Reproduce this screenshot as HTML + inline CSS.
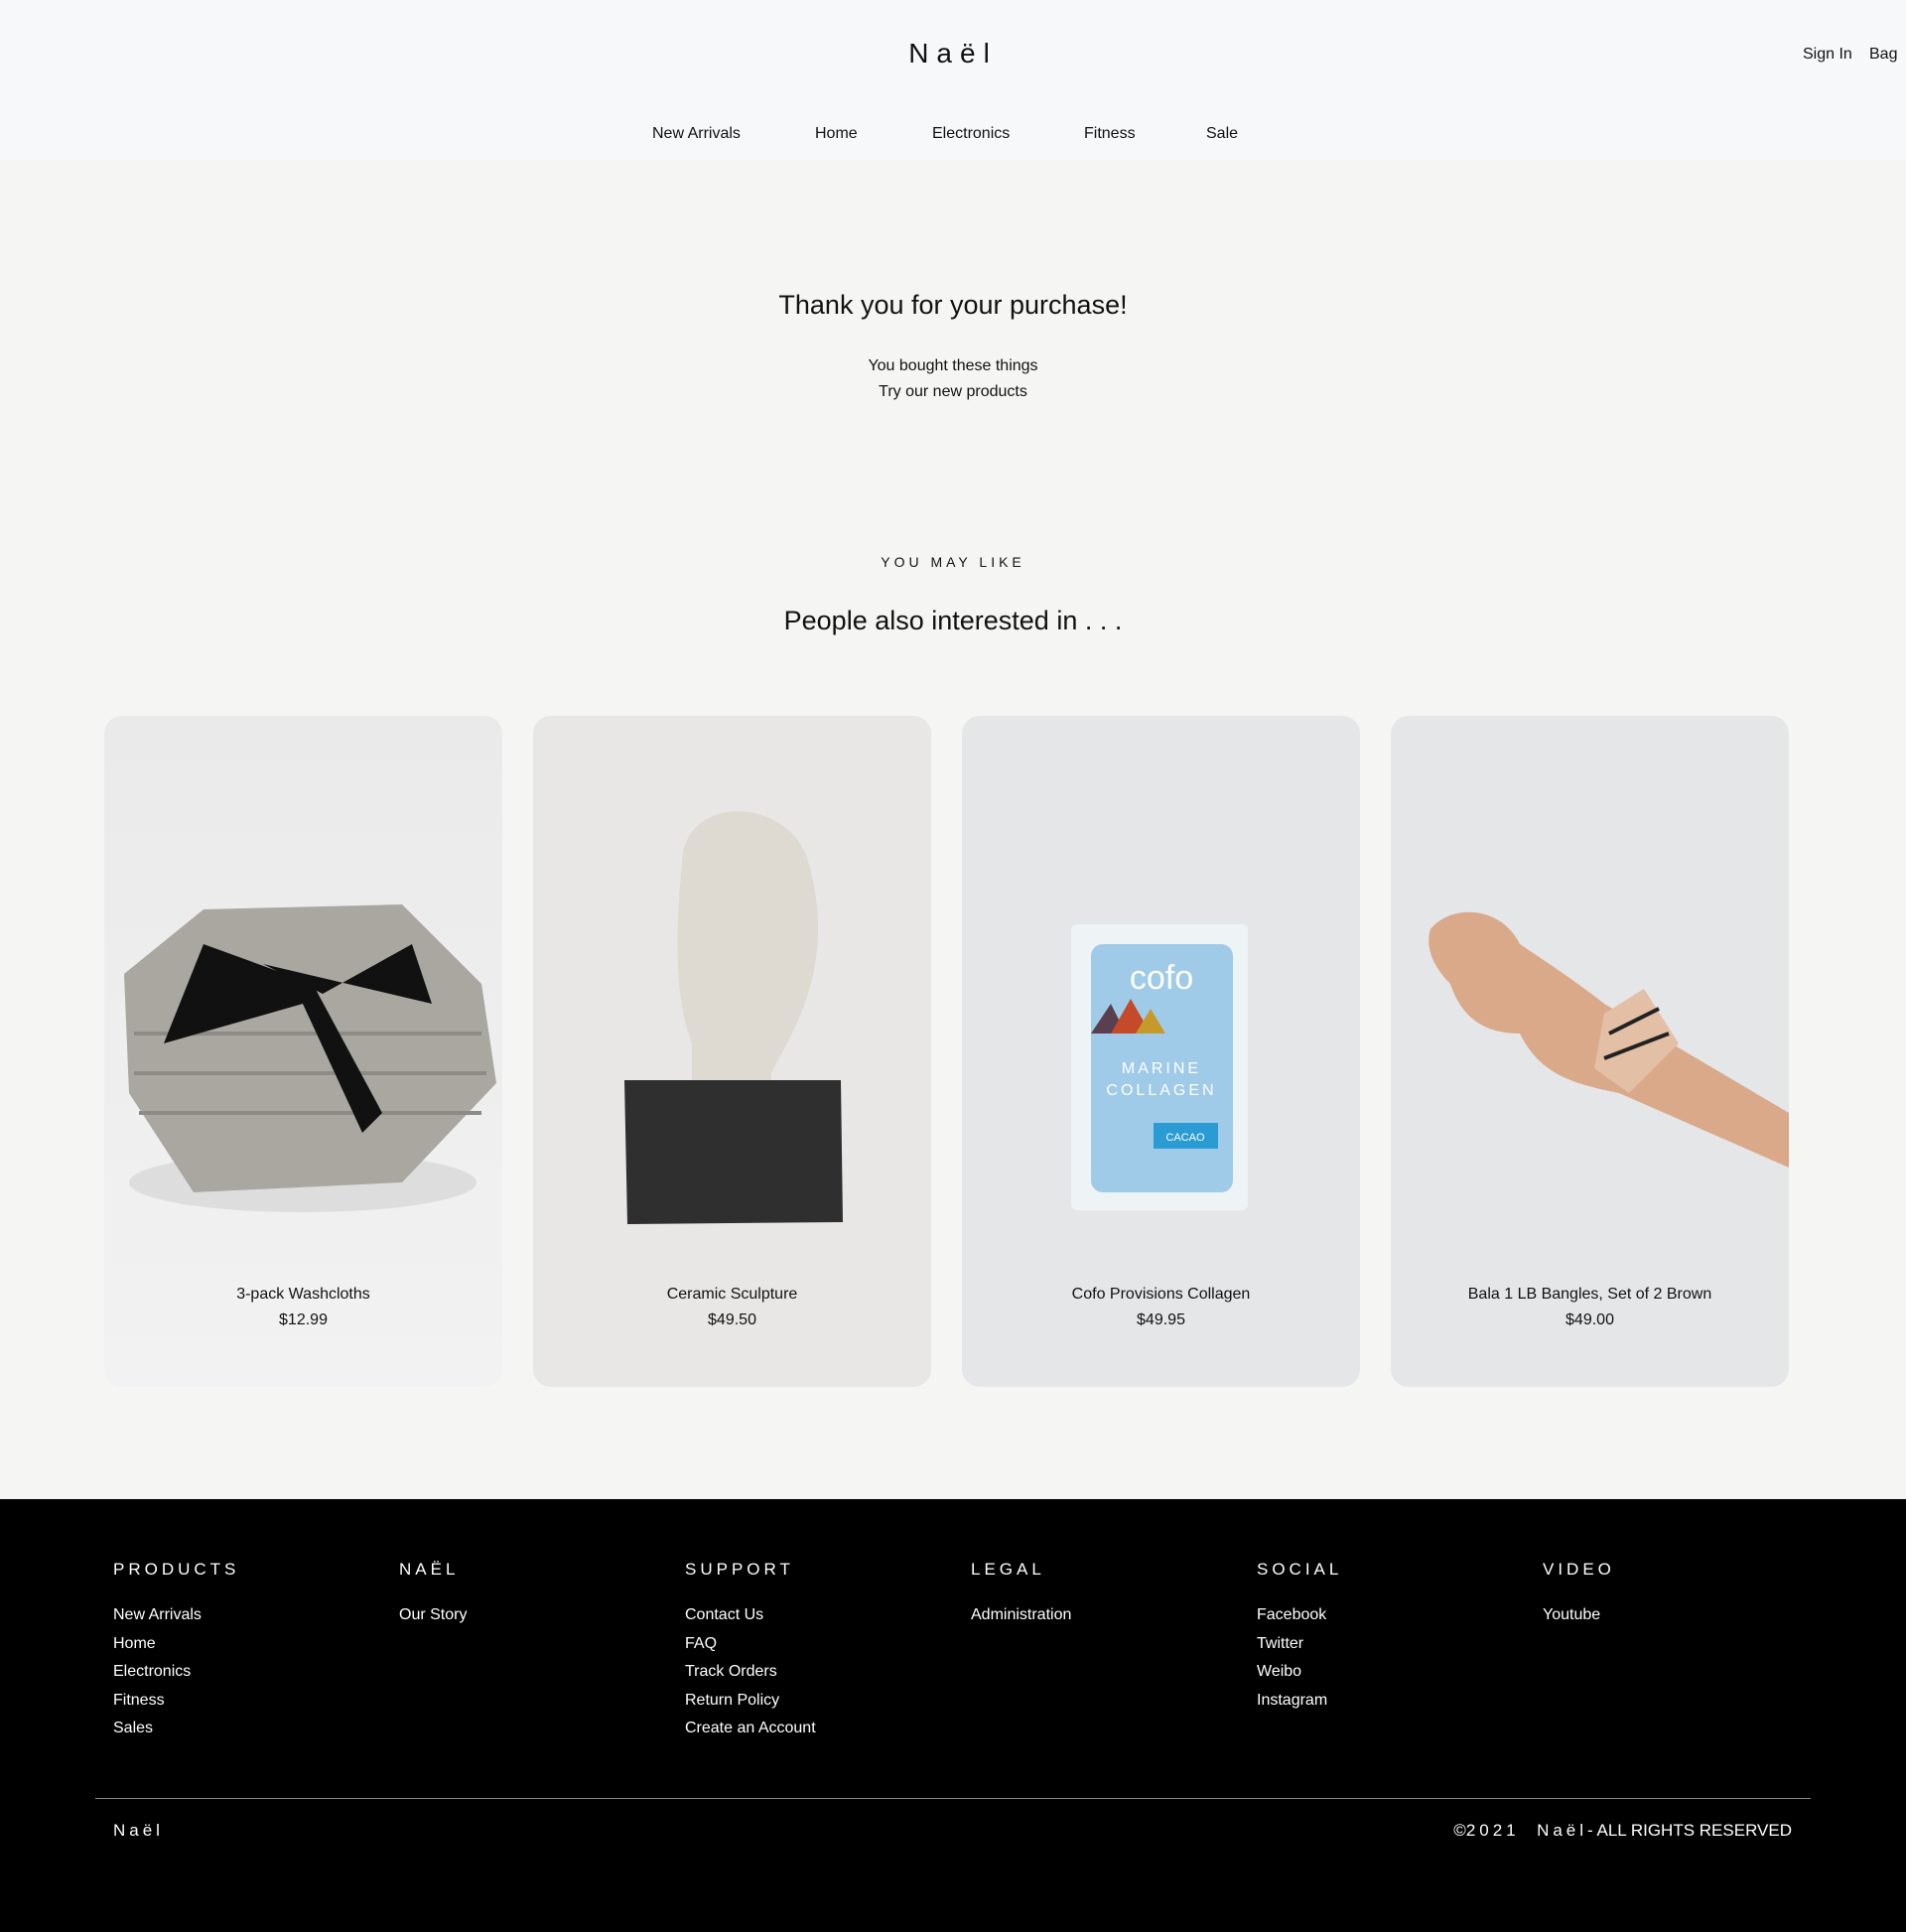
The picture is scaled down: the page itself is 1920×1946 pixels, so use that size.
<!DOCTYPE html>
<html><head><meta charset="utf-8"><style>
*{margin:0;padding:0;box-sizing:border-box}
body{width:1920px;height:1946px;position:relative;background:#f5f5f3;font-family:"Liberation Sans",sans-serif;color:#111;overflow:hidden}
.a{position:absolute;white-space:nowrap}
.c{transform:translateX(-50%)}
header{position:absolute;left:0;top:0;width:1920px;height:161px;background:#f7f8fa}
.nav{font-size:16px;top:126px}
.card{position:absolute;top:721px;width:401px;height:676px;border-radius:18px;overflow:hidden}
.card .n{position:absolute;top:574px;width:100%;text-align:center;font-size:16px}
.card .p{position:absolute;top:600px;width:100%;text-align:center;font-size:16px}
footer{position:absolute;left:0;top:1510px;width:1920px;height:436px;background:#000;color:#fff}
.h{font-size:17px;letter-spacing:4px;top:61px}
.l{font-size:16px;line-height:28.5px;top:103px}
</style></head><body>
<header>
<div class="a c" style="left:960px;top:38px;font-size:28px;letter-spacing:8px">Naël</div>
<div class="a" style="left:1816px;top:46px;font-size:16px">Sign In</div>
<div class="a" style="left:1883px;top:46px;font-size:16px">Bag</div>
<div class="a nav" style="left:657px">New Arrivals</div>
<div class="a nav" style="left:821px">Home</div>
<div class="a nav" style="left:939px">Electronics</div>
<div class="a nav" style="left:1092px">Fitness</div>
<div class="a nav" style="left:1215px">Sale</div>
</header>
<div class="a c" style="left:960px;top:292px;font-size:27px">Thank you for your purchase!</div>
<div class="a c" style="left:960px;top:360px;font-size:16px">You bought these things</div>
<div class="a c" style="left:960px;top:386px;font-size:16px">Try our new products</div>
<div class="a c" style="left:960px;top:558px;font-size:14px;letter-spacing:4px">YOU MAY LIKE</div>
<div class="a c" style="left:960px;top:610px;font-size:27px">People also interested in . . .</div>

<div class="card" style="left:105px;background:linear-gradient(#eaeaea,#f2f2f2)">
<svg width="401" height="676" style="position:absolute;left:0;top:0">
<ellipse cx="200" cy="470" rx="175" ry="30" fill="#ddd"/>
<path d="M20 260 L100 195 L300 190 L380 270 L395 370 L300 470 L90 480 L25 380Z" fill="#aaa6a0"/>
<path d="M30 320 L380 320 M30 360 L385 360 M35 400 L380 400" stroke="#8e8a85" stroke-width="4"/>
<path d="M100 230 L210 270 L280 400 L260 420 L200 290 L60 330Z" fill="#111"/>
<path d="M160 250 L220 280 L310 230 L330 290 Z" fill="#111"/>
</svg>
<div class="n">3-pack Washcloths</div><div class="p">$12.99</div></div>

<div class="card" style="left:537px;background:#e8e7e6">
<svg width="401" height="676" style="position:absolute;left:0;top:0">
<path d="M150 150 C150 80 250 80 275 140 C310 250 260 320 240 360 L240 390 L160 390 L160 330 C140 280 145 200 150 150Z" fill="#dedad1"/>
<path d="M92 367 L310 367 L312 510 L95 512Z" fill="#2f2f2f"/>
</svg>
<div class="n">Ceramic Sculpture</div><div class="p">$49.50</div></div>

<div class="card" style="left:969px;background:#e5e6e8">
<svg width="401" height="676" style="position:absolute;left:0;top:0">
<rect x="110" y="210" width="178" height="288" rx="6" fill="#eef3f6"/>
<rect x="130" y="230" width="143" height="250" rx="12" fill="#9fcbe8"/>
<text x="201" y="275" font-family="Liberation Sans" font-size="34" fill="#fff" text-anchor="middle">cofo</text>
<path d="M130 320 L150 290 L165 320Z" fill="#5a3f4e"/><path d="M150 320 L170 285 L190 320Z" fill="#c44a2a"/><path d="M175 320 L190 295 L205 320Z" fill="#c69a2a"/>
<text x="201" y="360" font-family="Liberation Sans" font-size="16" fill="#fff" text-anchor="middle" letter-spacing="3">MARINE</text>
<text x="201" y="382" font-family="Liberation Sans" font-size="16" fill="#fff" text-anchor="middle" letter-spacing="3">COLLAGEN</text>
<rect x="193" y="410" width="65" height="26" fill="#2b9bd3"/>
<text x="225" y="428" font-family="Liberation Sans" font-size="11" fill="#fff" text-anchor="middle">CACAO</text>
</svg>
<div class="n">Cofo Provisions Collagen</div><div class="p">$49.95</div></div>

<div class="card" style="left:1401px;background:#e5e6e8">
<svg width="401" height="676" style="position:absolute;left:0;top:0">
<path d="M40 215 C60 190 110 190 130 230 C160 250 190 270 215 290 L401 400 L401 455 L230 380 C180 370 150 360 130 320 C90 320 70 300 60 270 C40 250 35 230 40 215Z" fill="#d9a98a"/>
<path d="M215 300 L255 275 L290 330 L240 380 L205 355Z" fill="#e3bfa6"/>
<path d="M220 320 L270 295 M215 345 L280 320" stroke="#222" stroke-width="4"/>
</svg>
<div class="n">Bala 1 LB Bangles, Set of 2 Brown</div><div class="p">$49.00</div></div>

<footer>
<div class="a h" style="left:114px">PRODUCTS</div>
<div class="a h" style="left:402px">NAËL</div>
<div class="a h" style="left:690px">SUPPORT</div>
<div class="a h" style="left:978px">LEGAL</div>
<div class="a h" style="left:1266px">SOCIAL</div>
<div class="a h" style="left:1554px">VIDEO</div>
<div class="a l" style="left:114px">New Arrivals<br>Home<br>Electronics<br>Fitness<br>Sales</div>
<div class="a l" style="left:402px">Our Story</div>
<div class="a l" style="left:690px">Contact Us<br>FAQ<br>Track Orders<br>Return Policy<br>Create an Account</div>
<div class="a l" style="left:978px">Administration</div>
<div class="a l" style="left:1266px">Facebook<br>Twitter<br>Weibo<br>Instagram</div>
<div class="a l" style="left:1554px">Youtube</div>
<div class="a" style="left:96px;top:301px;width:1728px;height:1px;background:#888"></div>
<div class="a" style="left:114px;top:324px;font-size:17px;letter-spacing:4px">Naël</div>
<div class="a" style="right:115px;top:324px;font-size:17px">©<span style="letter-spacing:4px">2021 &nbsp;Naël</span>- ALL RIGHTS RESERVED</div>
</footer>
</body></html>
